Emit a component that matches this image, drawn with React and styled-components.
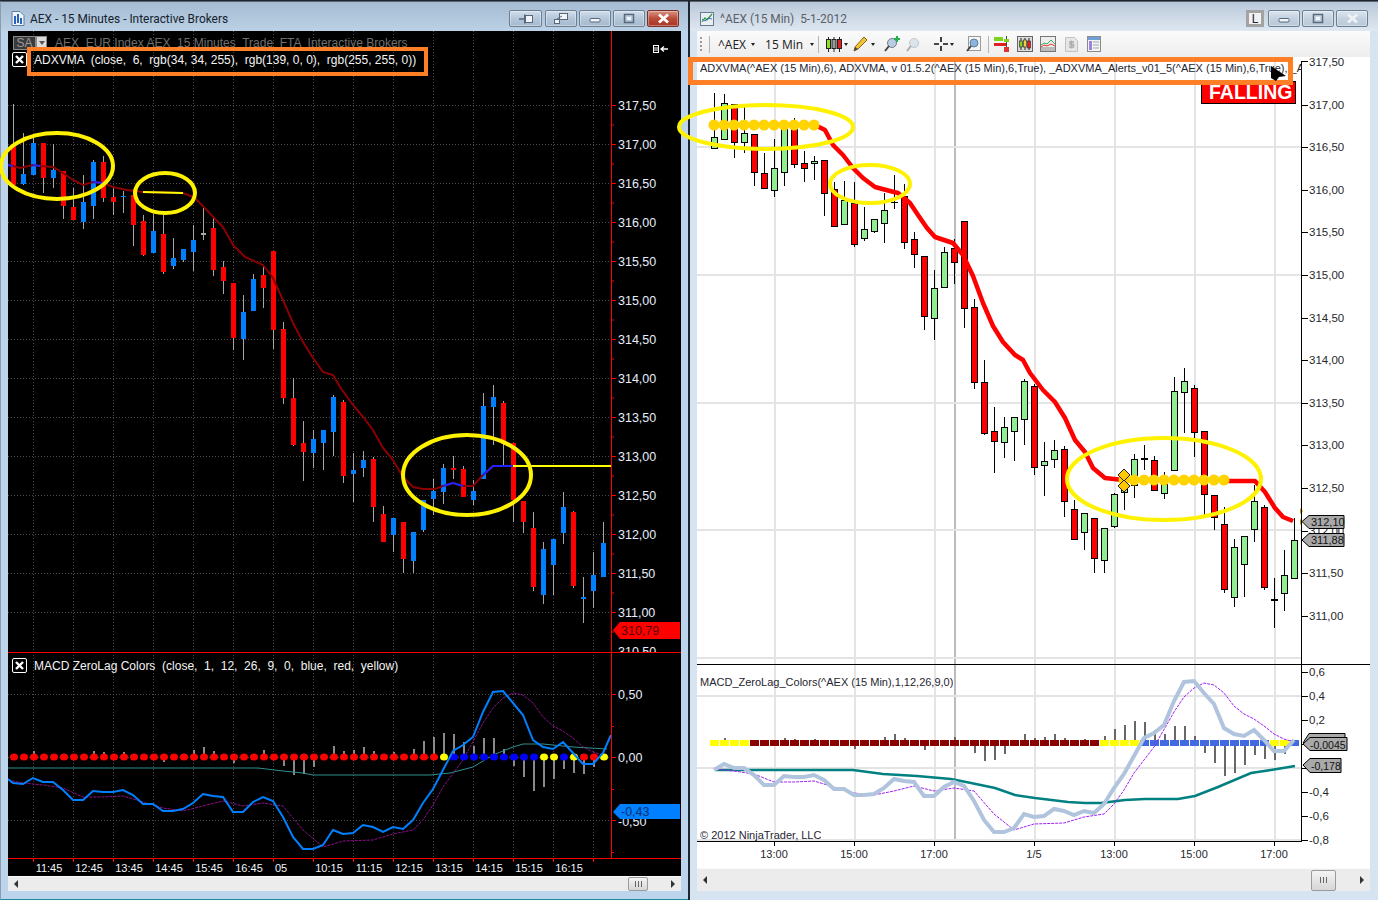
import React from 'react'
import styled, { createGlobalStyle, css } from 'styled-components'

const GlobalStyle = createGlobalStyle`
  html, body { margin: 0; padding: 0; background: #b9d1ea; overflow: hidden; }
  * { box-sizing: border-box; }
`

// bars in pixels of the right chart: high, body top, body bottom, low, type
const BARS = [
  [93,137,148,149,'u'],[94,103,139,139,'u'],[104,104,142,158,'d'],[105,133,142,153,'u'],[134,134,172,186,'d'],
  [153,173,188,188,'d'],[139,168,190,197,'u'],[122,124,172,186,'u'],[118,124,164,168,'d'],[151,163,168,182,'d'],
  [156,161,163,180,'u'],[160,160,193,216,'d'],[182,189,226,227,'d'],[181,200,224,224,'u'],[182,203,244,247,'d'],
  [207,229,238,241,'u'],[219,219,231,233,'u'],[193,210,223,243,'u'],[175,202,202,209,'n'],[184,196,242,249,'d'],
  [232,239,254,268,'d'],[256,256,316,330,'d'],[270,288,318,340,'u'],[247,252,287,287,'u'],[239,248,262,284,'d'],
  [221,221,308,328,'d'],[299,307,382,389,'d'],[360,382,433,435,'d'],[407,431,441,473,'d'],[417,427,442,458,'u'],
  [417,417,431,461,'u'],[379,381,419,445,'u'],[384,386,467,475,'d'],[442,461,465,496,'u'],[440,450,459,468,'u'],
  [446,449,501,517,'d'],[500,509,539,539,'d'],[513,513,532,550,'u'],[518,518,558,573,'d'],[528,528,560,573,'u'],
  [493,494,526,528,'u'],[470,484,492,510,'u'],[454,459,485,498,'u'],[445,458,458,470,'d'],[456,460,490,490,'d'],
  [472,484,493,499,'u'],[377,391,470,470,'u'],[368,381,392,433,'u'],[385,388,432,457,'d'],[431,431,494,518,'d'],
  [495,495,517,530,'d'],[507,524,589,593,'d'],[539,547,597,607,'u'],[536,536,564,597,'u'],[485,501,529,542,'u'],
  [505,507,587,590,'d'],[578,599,599,628,'u'],[550,575,593,611,'u'],[518,540,578,578,'u'],
]
const LEFT_BARS = [[61,106,149,149,'d'], ...BARS]
const toLeft = (y) => Math.round(105 + ((y - 62) * 78) / 85.2)

const LEFT_MA = [[8,165],[13,166],[20,168],[33,165],[40,166],[53,167],[63,173],[73,180],[83,185],[93,182],[103,183],[113,187],[127,190],[143,192],[183,193],[193,197],[197,200],[223,227],[233,245],[245,257],[263,265],[273,278],[283,300],[293,323],[303,342],[313,358],[323,372],[333,375],[340,387],[353,405],[363,417],[373,430],[383,448],[393,460],[403,477],[413,487],[423,489],[435,489],[443,486],[453,483],[463,486],[473,486],[483,475],[493,466],[513,466]]
const LEFT_MA_BLUE = [[[8,165],[13,166]],[[33,165],[40,166]],[[93,182],[103,183]],[[443,486],[453,483],[463,486]],[[483,475],[493,466],[513,466]]]
const LEFT_MA_YELLOW = [[[143,192],[183,193]],[[513,466],[611,466]]]

const RIGHT_MA = [[815,125],[825,130],[833,145],[843,155],[853,168],[863,178],[875,187],[890,191],[898,193],[910,203],[918,215],[927,228],[935,237],[953,243],[963,255],[973,276],[983,303],[993,326],[1003,342],[1015,355],[1023,360],[1030,373],[1043,390],[1055,402],[1065,418],[1075,440],[1085,452],[1093,468],[1105,478],[1123,480]]
const RIGHT_MA_END = [[1227,481],[1255,481],[1265,492],[1275,508],[1283,517],[1293,521]]

const MACD = [[8,779],[13,783],[23,784],[33,778],[43,782],[53,782],[63,790],[73,800],[83,800],[93,791],[103,792],[113,792],[123,790],[133,795],[143,804],[153,804],[163,811],[173,811],[183,809],[193,803],[203,794],[213,796],[223,797],[233,812],[243,812],[253,802],[263,797],[273,801],[283,817],[293,837],[303,849],[313,849],[323,845],[333,830],[343,834],[353,833],[363,825],[373,827],[383,832],[393,827],[403,829],[413,820],[423,803],[433,789],[443,770],[453,751],[463,745],[473,737],[483,712],[493,692],[503,691],[513,703],[523,715],[533,740],[543,747],[553,749],[563,742],[573,753],[583,764],[593,764],[603,753],[611,735]]
const SIGNAL = [[8,780],[23,783],[43,785],[63,788],[83,797],[103,797],[123,796],[143,802],[163,808],[183,811],[203,806],[223,801],[243,806],[263,803],[283,806],[303,830],[323,847],[343,841],[373,840],[393,834],[413,830],[423,820],[433,805],[443,787],[463,760],[483,723],[493,708],[503,698],[513,693],[523,695],[533,703],[543,717],[553,726],[563,731],[573,738],[583,747],[593,752],[603,755]]
const LEFT_TEAL = [[8,768],[258,768],[283,771],[303,773],[313,775],[430,775],[450,773],[473,767],[493,755],[513,747],[523,744],[543,744],[573,747],[607,749]]
const RIGHT_TEAL = [[715,770],[853,770],[883,774],[917,776],[951,779],[971,783],[995,788],[1015,795],[1035,798],[1068,802],[1085,803],[1101,803],[1125,800],[1145,799],[1178,799],[1195,796],[1218,787],[1251,773],[1271,770],[1295,766]]

// histogram: bar index and offset from the zero line in left pixels
const HIST = {2:-6,8:-6,9:-5,11:-5,15:5,18:-7,19:-10,20:-6,22:6,25:-7,27:9,28:18,29:17,30:10,32:-11,33:-6,34:-7,35:-10,36:-6,38:-5,40:-8,41:-16,42:-20,43:-24,44:-23,45:-15,46:-11,47:-19,48:-19,49:-8,50:9,51:20,52:34,53:30,54:22,55:12,56:16,57:17,58:10}

const leftDotColor = (i) => {
  if (i < 43) return '#ff0000'
  if ([43,53,54,56,59].includes(i)) return '#ffff00'
  if ([57,58].includes(i)) return '#ff0000'
  return '#0000ff'
}
const rightSquareColor = (k) => {
  if (k < 4 || (k >= 39 && k < 43) || k === 56 || k === 57) return '#ffff00'
  if (k < 39) return '#8b0000'
  return '#4169e1'
}

const LEFT_PRICES = ['317,50','317,00','316,50','316,00','315,50','315,00','314,50','314,00','313,50','313,00','312,50','312,00','311,50','311,00']
const LEFT_TIMES = [['11:45',49],['12:45',89],['13:45',129],['14:45',169],['15:45',209],['16:45',249],['05',281],['10:15',329],['11:15',369],['12:15',409],['13:15',449],['14:15',489],['15:15',529],['16:15',569]]
const RIGHT_TIMES = [['13:00',774],['15:00',854],['17:00',934],['1/5',1034],['13:00',1114],['15:00',1194],['17:00',1274]]
const RIGHT_LOWER = [['0,6',672],['0,4',696],['0,2',720],['-0,4',792],['-0,6',816],['-0,8',840]]

const pts = (list) => list.map((p) => p.join(',')).join(' ')
const toRightMacd = (list) => list.filter(([x]) => x >= 23 && x <= 603).map(([x, y]) => [x + 691, Math.round(744 + ((y - 757) * 120) / 126)])

const Desktop = styled.div`
  position: relative;
  display: flex;
  width: 1378px;
  height: 900px;
  background: #1c2530;
  font-family: "Liberation Sans", Arial, sans-serif;
`
const Window = styled.div`
  display: flex;
  flex-direction: column;
  height: 900px;
  border-top: 1px solid #5a6470;
  margin-top: 1px;
  ${(p) => p.$side === 'left' ? css`
    width: 688px;
    padding: 0 7px 7px 7px;
    background: #bdd5ec;
    border-left: 1px solid #8c9cab;
    border-bottom: 2px solid #1d8f9c;
  ` : css`
    width: 688px;
    margin-left: 2px;
    padding: 0 8px 9px 7px;
    background: #d6e4f2;
  `}
`
const TitleBar = styled.div`
  display: flex;
  align-items: center;
  flex: 0 0 29px;
  ${(p) => p.$side === 'left' ? css`
    margin: 0 -7px;
    padding: 4px 9px 0 10px;
    background: linear-gradient(#a4bbd2, #bcd1e5);
  ` : css`
    margin: 0 -8px 0 -7px;
    padding: 4px 10px 0 10px;
    background: linear-gradient(#b9c8d9, #dfe8f1);
  `}
`
const TitleText = styled.span`
  margin-left: ${(p) => p.$side === 'left' ? 5 : 6}px;
  font: 11.9px Roboto, sans-serif;
  color: ${(p) => p.$side === 'left' ? '#16222e' : '#5a6068'};
  white-space: pre;
`
const TitleSpace = styled.div`
  flex: 1;
`
const WinButton = styled.div`
  display: flex;
  align-items: center;
  justify-content: center;
  width: ${(p) => p.$w || 32}px;
  height: 17px;
  margin-left: ${(p) => p.$ml || 2}px;
  border: 1px solid ${(p) => p.$close ? '#7a3228' : '#6b7f93'};
  border-radius: 2px;
  box-shadow: inset 0 0 0 1px rgba(255, 255, 255, 0.35);
  background: ${(p) => p.$close
    ? 'linear-gradient(#dc9484, #bb4c3a 50%, #a93525)'
    : p.$side === 'left' ? 'linear-gradient(#d2deeb, #b4c6d9 50%, #a5b9ce)' : 'linear-gradient(#dbe4ee, #c3d1df 50%, #b8c8d8)'};
`
const LockButton = styled.div`
  display: flex;
  align-items: center;
  justify-content: center;
  width: 18px;
  height: 17px;
  margin-right: 2px;
  border: 3px solid #a3a3a3;
  background: #f2f2f2;
  font: 12px "Liberation Sans", sans-serif;
  color: #223;
`
const BlackChart = styled.div`
  position: relative;
  flex: 0 0 845px;
  background: #000;
  overflow: hidden;
`
const WhiteChart = styled.div`
  position: relative;
  flex: 0 0 811px;
  background: #fff;
  overflow: hidden;
`
const ChartSvg = styled.svg`
  display: block;
  text {
    font-family: "Liberation Sans", Arial, sans-serif;
  }
`
const HeaderRow = styled.div`
  position: absolute;
  left: 5px;
  top: 5px;
  display: flex;
  align-items: center;
  height: 14px;
`
const SaBox = styled.div`
  width: 23px;
  height: 14px;
  border: 1px solid #8a8a8a;
  background: #3a3a3a;
  font-size: 12px;
  line-height: 12px;
  text-align: center;
  color: #9a9a9a;
`
const SaCaret = styled.div`
  width: 11px;
  height: 14px;
  margin-right: 8px;
  border: 1px solid #8a8a8a;
  background: #dcdcdc;
  &::after {
    content: '';
    display: block;
    margin: 4px auto 0;
    width: 0;
    border: 3px solid transparent;
    border-top: 4px solid #555;
  }
`
const HeaderText = styled.span`
  font-size: 12px;
  color: #6f6f6f;
  white-space: pre;
`
const LegendRow = styled.div`
  position: absolute;
  left: 4px;
  top: ${(p) => p.$top}px;
  display: flex;
  align-items: center;
  gap: 7px;
  height: 15px;
`
const LegendText = styled.span`
  font-size: 12px;
  color: #f4f4f4;
  white-space: pre;
`
const XBox = styled.div`
  width: 15px;
  height: 15px;
  border: 1px solid #fff;
  border-radius: 2px;
  background: #000;
`
const ListGlyph = styled.svg`
  position: absolute;
  left: 645px;
  top: 14px;
`
const WhiteLegend = styled.div`
  position: absolute;
  left: 3px;
  top: ${(p) => p.$top}px;
  max-width: 602px;
  overflow: hidden;
  font-size: 11px;
  line-height: 13px;
  color: #1f2630;
  white-space: pre;
`
const Falling = styled.div`
  position: absolute;
  left: 504px;
  top: 24px;
  width: 95px;
  height: 23px;
  padding-left: 7px;
  border: 1px solid #000;
  background: #ff0000;
  font-size: 19.5px;
  font-weight: 700;
  line-height: 21px;
  color: #fff;
`
const Toolbar = styled.div`
  display: flex;
  align-items: center;
  flex: 0 0 26px;
  padding-left: 3px;
  background: linear-gradient(#fbfbfb, #ededed);
  font-size: 12px;
  color: #222;
`
const Grip = styled.div`
  width: 2px;
  height: 15px;
  background: repeating-linear-gradient(#9a9a9a 0 2px, transparent 2px 4px);
`
const ToolSep = styled.div`
  width: 1px;
  height: 17px;
  margin-left: ${(p) => p.$ml}px;
  background: #b5b5b5;
`
const ToolLabel = styled.span`
  margin-left: ${(p) => p.$ml}px;
  font: 12px "Open Sans", sans-serif;
  color: #202020;
  white-space: pre;
`
const Caret = styled.span`
  width: 0;
  height: 0;
  margin-left: ${(p) => p.$ml}px;
  border: 2.5px solid transparent;
  border-top: 3px solid #222;
  border-bottom: 0;
`
const ToolIcon = styled.svg`
  flex: none;
  margin-left: ${(p) => p.$ml}px;
`
const ScrollBar = styled.div`
  display: flex;
  align-items: center;
  flex: 0 0 ${(p) => p.$h}px;
  padding: 0 6px 0 6px;
  border-top: 1px solid #fafafa;
  background: #ececec;
`
const ArrowLeft = styled.span`
  width: 0;
  height: 0;
  border: 4px solid transparent;
  border-right: 4px solid #333;
  border-left: 0;
`
const ArrowRight = styled.span`
  width: 0;
  height: 0;
  margin-left: ${(p) => p.$ml}px;
  border: 4px solid transparent;
  border-left: 4px solid #333;
  border-right: 0;
`
const Thumb = styled.div`
  display: flex;
  align-items: center;
  justify-content: center;
  width: ${(p) => p.$w}px;
  height: ${(p) => p.$h}px;
  margin-left: auto;
  border: 1px solid #9b9b9b;
  border-radius: 2px;
  background: linear-gradient(#f4f4f4, #d6d6d6);
  font-size: 9px;
  letter-spacing: 1px;
  color: #555;
  &::after {
    content: '';
    width: 7px;
    height: 6px;
    background: repeating-linear-gradient(90deg, #666 0 1px, transparent 1px 3px);
  }
`
const Overlay = styled.svg`
  position: absolute;
  left: 0;
  top: 0;
  pointer-events: none;
`

const XMark = () => (
  <svg width="13" height="13" viewBox="0 0 13 13" style={{ display: 'block' }}>
    <path d="M3 3l7 7M10 3l-7 7" stroke="#fff" strokeWidth="2.4" />
  </svg>
)

const Glyph = ({ kind, color = '#f2f5f8', line = '#55687c' }) => {
  if (kind === 'pin') return (
    <svg width="16" height="12" viewBox="0 0 16 12"><path d="M1 6h5" stroke={line} strokeWidth="1.5" /><rect x="6" y="1.5" width="1.5" height="9" fill={line} /><rect x="7.5" y="2.5" width="7" height="7" fill={color} stroke={line} /></svg>
  )
  if (kind === 'float') return (
    <svg width="16" height="13" viewBox="0 0 16 13"><rect x="6.5" y="1.5" width="8" height="6" fill={color} stroke={line} /><rect x="1.5" y="7.5" width="5" height="4" fill={color} stroke={line} /><path d="M4 7l5-3" stroke={line} /></svg>
  )
  if (kind === 'min') return (
    <svg width="13" height="7" viewBox="0 0 13 7" style={{ marginTop: 4 }}><rect x="1" y="1.5" width="10" height="3.5" rx="1" fill={color} stroke={line} /></svg>
  )
  if (kind === 'max') return (
    <svg width="12" height="11" viewBox="0 0 12 11"><rect x="1.5" y="1.5" width="9" height="8" fill="none" stroke={line} strokeWidth="1.5" /><rect x="4" y="4" width="4" height="3" fill={color} /></svg>
  )
  return (
    <svg width="13" height="11" viewBox="0 0 13 11"><path d="M2 1.5l9 8M11 1.5l-9 8" stroke={color} strokeWidth="2.8" /></svg>
  )
}

const LeftTitleIcon = () => (
  <svg width="14" height="15" viewBox="0 0 14 15">
    <path d="M1 .5h8l4 4v10H1z" fill="#eef3fa" stroke="#5f7fa8" />
    <path d="M4 5v8M7 3v9M10 7v6" stroke="#2a64b8" strokeWidth="2" />
  </svg>
)
const RightTitleIcon = () => (
  <svg width="14" height="14" viewBox="0 0 14 14">
    <rect x=".5" y=".5" width="13" height="13" fill="#e8eef4" stroke="#6a7a8c" />
    <path d="M2 10l3-4 2 2 5-6" fill="none" stroke="#2f9a3a" strokeWidth="1.2" />
    <path d="M2 7l3 2 3-3 4 1" fill="none" stroke="#3d6fc0" strokeWidth="1" />
  </svg>
)
const CandlesIcon = () => (
  <ToolIcon $ml={7} width="16" height="17" viewBox="0 0 16 17">
    <path d="M2.5 1v15M8 1v15M13.5 1v15" stroke="#222" />
    <rect x=".5" y="3.5" width="4" height="9" fill="#8fe020" stroke="#222" />
    <rect x="6" y="3.5" width="4" height="9" fill="#9a9a9a" stroke="#222" />
    <rect x="11.5" y="3.5" width="4" height="9" fill="#e02020" stroke="#222" />
  </ToolIcon>
)
const PencilIcon = () => (
  <ToolIcon $ml={5} width="15" height="16" viewBox="0 0 15 16">
    <path d="M11 1l3 3-9 9-4 2 1-4z" fill="#f4c430" stroke="#8a6a20" />
    <path d="M1 15l1-4 3 2z" fill="#444" />
  </ToolIcon>
)
const MagnifierIcon = ({ ml, faded, plus }) => (
  <ToolIcon $ml={ml} width="17" height="16" viewBox="0 0 17 16" opacity={faded ? 0.4 : 1}>
    <circle cx="8" cy="7" r="4.5" fill="#b9cde2" stroke="#6f7f90" />
    <path d="M5 10l-4 5" stroke="#444" strokeWidth="2" />
    {plus && <path d="M13 0v6M10 3h6" stroke="#22b14c" strokeWidth="2" />}
  </ToolIcon>
)
const CrossIcon = () => (
  <ToolIcon $ml={11} width="14" height="14" viewBox="0 0 14 14">
    <path d="M7 0v5M7 9v5M0 7h5M9 7h5" stroke="#111" strokeWidth="1.6" />
  </ToolIcon>
)
const PageMagIcon = () => (
  <ToolIcon $ml={12} width="15" height="16" viewBox="0 0 15 16">
    <rect x="2.5" y=".5" width="12" height="14" fill="#f6f6f6" stroke="#999" />
    <circle cx="8" cy="7" r="4" fill="#8fb4dc" stroke="#5f7f9f" />
    <path d="M5 10l-4 5" stroke="#444" strokeWidth="2" />
  </ToolIcon>
)
const BarsIcon = () => (
  <ToolIcon $ml={5} width="16" height="16" viewBox="0 0 16 16">
    <path d="M12.5 0v16" stroke="#444" />
    <rect x="0" y="1" width="9" height="4" fill="#7ed321" />
    <rect x="0" y="7" width="12" height="3" fill="#e02020" />
    <rect x="10" y="11" width="5" height="5" fill="#d33" />
    <rect x="10" y="3" width="5" height="3" fill="#7ed321" />
  </ToolIcon>
)
const CandleBoxIcon = () => (
  <ToolIcon $ml={7} width="16" height="16" viewBox="0 0 16 16">
    <rect x=".5" y=".5" width="15" height="15" fill="#dcdcdc" stroke="#666" />
    <path d="M4 2v12M8 2v12M12 2v12" stroke="#222" />
    <rect x="2.5" y="5" width="3" height="6" fill="#7ed321" stroke="#222" strokeWidth=".6" />
    <rect x="6.5" y="4" width="3" height="7" fill="#f0d040" stroke="#222" strokeWidth=".6" />
    <rect x="10.5" y="5" width="3" height="7" fill="#e02020" stroke="#222" strokeWidth=".6" />
  </ToolIcon>
)
const ChartIcon = () => (
  <ToolIcon $ml={7} width="16" height="16" viewBox="0 0 16 16">
    <rect x=".5" y=".5" width="15" height="15" fill="#eeeeee" stroke="#777" />
    <rect x="1" y="11" width="14" height="4" fill="#bbb" />
    <path d="M1 9l3-2 3 1 4-4 4 4" fill="none" stroke="#3aaa5a" />
    <path d="M1 11l3-2 3 1 4-2 4 2" fill="none" stroke="#d33" />
  </ToolIcon>
)
const DollarIcon = () => (
  <ToolIcon $ml={9} width="13" height="15" viewBox="0 0 13 15">
    <path d="M.5.5h9l3 3v11H.5z" fill="#e6e6e6" stroke="#c2c2c2" />
    <path d="M9 5H5v2.500h3.500V10H4M6.500 3.500v8" fill="none" stroke="#adadad" strokeWidth="1.400" />
  </ToolIcon>
)
const TableIcon = () => (
  <ToolIcon $ml={9} width="14" height="16" viewBox="0 0 14 16">
    <rect x=".5" y=".5" width="13" height="15" fill="#f4f4f4" stroke="#8a8a8a" />
    <rect x="1" y="1" width="12" height="3" fill="#6f9fd8" />
    <rect x="2" y="5" width="3" height="9" fill="#a080e0" />
    <path d="M6 6h6M6 9h6M6 12h6" stroke="#9aa" />
  </ToolIcon>
)

const LeftUpperChart = () => (
  <g>
    {LEFT_PRICES.map((_, k) => (
      <line key={k} x1="8" x2="611" y1={105 + 39 * k + 0.5} y2={105 + 39 * k + 0.5} stroke="#4a4a4a" strokeDasharray="1 2" />
    ))}
    {Array.from({ length: 15 }, (_, k) => (
      <line key={k} x1={33.5 + 40 * k} x2={33.5 + 40 * k} y1="31" y2="858" stroke="#4a4a4a" strokeDasharray="1 2" />
    ))}
    {LEFT_BARS.map(([hi, top, bot, lo, t], i) => {
      const x = 13 + 10 * i
      const doji = top === bot
      const fill = t === 'n' ? '#aaaaaa' : t === 'u' ? '#0080ff' : '#ff0000'
      return (
        <g key={i}>
          <rect x={x} y={toLeft(hi)} width="1" height={toLeft(lo) - toLeft(hi)} fill="#a6a6a6" />
          <rect x={x - 2} y={toLeft(top)} width="5" height={doji ? 2 : toLeft(bot) - toLeft(top)} fill={fill} />
        </g>
      )
    })}
    <polyline points={pts(LEFT_MA)} fill="none" stroke="#8b0000" strokeWidth="2" />
    {LEFT_MA_BLUE.map((s, k) => <polyline key={k} points={pts(s)} fill="none" stroke="#2222ff" strokeWidth="2" />)}
    {LEFT_MA_YELLOW.map((s, k) => <polyline key={k} points={pts(s)} fill="none" stroke="#ffff00" strokeWidth="2" />)}
    {LEFT_PRICES.map((p, k) => (
      <g key={p}>
        <line x1="611" x2="616" y1={105.5 + 39 * k} y2={105.5 + 39 * k} stroke="#ff0000" />
        <line x1="611" x2="614" y1={125 + 39 * k} y2={125 + 39 * k} stroke="#ff0000" />
        <text x="618" y={110 + 39 * k} fontSize="12.5" fill="#e6eefc">{p}</text>
      </g>
    ))}
    <text x="618" y="655.500" fontSize="12.5" fill="#e6eefc">310,50</text>
  </g>
)

const LeftLowerChart = () => (
  <g>
    <rect x="8" y="652" width="673" height="224" fill="#000" />
    {[694, 757, 820].map((y) => (
      <line key={y} x1="8" x2="611" y1={y + 0.5} y2={y + 0.5} stroke="#4a4a4a" strokeDasharray="1 2" />
    ))}
    {Array.from({ length: 15 }, (_, k) => (
      <line key={k} x1={33.5 + 40 * k} x2={33.5 + 40 * k} y1="652" y2="858" stroke="#4a4a4a" strokeDasharray="1 2" />
    ))}
    {Object.entries(HIST).map(([i, d]) => (
      <rect key={i} x={12 + 10 * i + 1} y={d < 0 ? 757 + d : 757} width="2" height={Math.abs(d)} fill="#8a8a8a" />
    ))}
    <polyline points={pts(LEFT_TEAL)} fill="none" stroke="#2f8f8f" strokeWidth="1" />
    <polyline points={pts(SIGNAL)} fill="none" stroke="#8b108b" strokeWidth="1" strokeDasharray="3 1" />
    {Array.from({ length: 60 }, (_, i) => (
      <ellipse key={i} cx={14 + 10 * i} cy="757" rx="4" ry="3.600" fill={leftDotColor(i)} />
    ))}
    <polyline points={pts(MACD)} fill="none" stroke="#0080ff" strokeWidth="2" />
    <rect x="8" y="652" width="673" height="1" fill="#ff0000" />
    <rect x="8" y="858" width="673" height="1" fill="#ff0000" />
    <rect x="611" y="31" width="1" height="827" fill="#ff0000" />
    {[694, 757, 820].map((y) => <line key={y} x1="611" x2="616" y1={y + 0.5} y2={y + 0.5} stroke="#ff0000" />)}
    {[726, 789, 852].map((y) => <line key={y} x1="611" x2="614" y1={y + 0.5} y2={y + 0.5} stroke="#ff0000" />)}
    <text x="618" y="698.500" fontSize="12.5" fill="#e6eefc">0,50</text>
    <text x="618" y="761.500" fontSize="12.5" fill="#e6eefc">0,00</text>
    <text x="618" y="825.500" fontSize="12.5" fill="#e6eefc">-0,50</text>
    <polygon points="613,630 620,622 680,622 680,639 620,639" fill="#ff0000" />
    <text x="621" y="635" fontSize="12.5" fill="#5a0000">310,79</text>
    <polygon points="613,812 620,804 680,804 680,819 620,819" fill="#0080ff" />
    <text x="621" y="816" fontSize="12.5" fill="#00306e">-0,43</text>
    {Array.from({ length: 15 }, (_, k) => (
      <line key={k} x1={33.5 + 40 * k} x2={33.5 + 40 * k} y1="858" y2="862" stroke="#ff0000" />
    ))}
    {LEFT_TIMES.map(([t, x], k) => (
      <text key={k} x={x} y="872" fontSize="11" fill="#f0f4fa" textAnchor="middle">{t}</text>
    ))}
  </g>
)

const RightUpperChart = () => (
  <g>
    {[774, 854, 934, 1034, 1114, 1194, 1274].map((x) => (
      <rect key={x} x={x} y="57" width="2" height="784" fill="#e4e4e4" />
    ))}
    <rect x="954" y="57" width="2" height="784" fill="#bcbcbc" />
    {[146, 274, 402, 529, 657].map((y) => (
      <rect key={y} x="697" y={y} width="605" height="2" fill="#e4e4e4" />
    ))}
    {BARS.map(([hi, top, bot, lo, t], i) => {
      const x = 714 + 10 * i
      const doji = top === bot
      return (
        <g key={i}>
          <rect x={x} y={hi} width="1" height={lo - hi} fill="#000" />
          {doji
            ? <rect x={x - 3} y={top} width="7" height={t === 'n' ? 1 : 2} fill="#000" />
            : <rect x={x - 2.5} y={top + 0.5} width="6" height={bot - top} fill={t === 'u' ? '#90ee90' : '#ff0000'} stroke="#000" />}
        </g>
      )
    })}
    <polyline points={pts(RIGHT_MA)} fill="none" stroke="#ff0000" strokeWidth="4.500" strokeLinejoin="round" />
    <polyline points={pts(RIGHT_MA_END)} fill="none" stroke="#ff0000" strokeWidth="4.500" strokeLinejoin="round" />
    {Array.from({ length: 11 }, (_, k) => <circle key={k} cx={714 + 10 * k} cy="125" r="5.500" fill="#ffd400" />)}
    {Array.from({ length: 11 }, (_, k) => <circle key={k} cx={1124 + 10 * k} cy="480" r="5.500" fill="#ffd400" />)}
    {[475, 486].map((y) => (
      <polygon key={y} points={`1124,${y - 6} 1130,${y} 1124,${y + 6} 1118,${y}`} fill="#ffc800" stroke="#222" />
    ))}
    <polygon points="1300,508 1303,511 1300,514" fill="#c8a000" />
    <polygon points="1300,519 1303,522 1300,525" fill="#c8a000" />
  </g>
)

const RightLowerChart = () => (
  <g>
    {[695, 767, 839].map((y) => <rect key={y} x="697" y={y} width="605" height="2" fill="#e4e4e4" />)}
    <polyline points={pts(RIGHT_TEAL)} fill="none" stroke="#008080" strokeWidth="2.500" />
    {Object.entries(HIST).map(([i, d]) => {
      const h = Math.round(Math.abs(d) * 0.952)
      return <rect key={i} x={704 + 10 * i} y={d < 0 ? 744 - h : 744} width="2" height={h} fill="#686868" />
    })}
    {Array.from({ length: 59 }, (_, k) => (
      <rect key={k} x={710 + 10 * k} y="740" width="9" height="6" fill={rightSquareColor(k)} />
    ))}
    <polyline points={pts(toRightMacd(SIGNAL))} fill="none" stroke="#a020f0" strokeWidth="1" strokeDasharray="3 1" />
    <polyline points={pts(toRightMacd(MACD))} fill="none" stroke="#b0c4de" strokeWidth="4" />
    <rect x="697" y="664" width="673" height="1" fill="#000" />
    <rect x="697" y="841" width="605" height="1" fill="#000" />
    <rect x="1301" y="61" width="1" height="781" fill="#000" />
    <rect x="1302" y="61" width="6" height="1" fill="#000" />
    {Array.from({ length: 14 }, (_, k) => {
      const y = Math.round(62 + 42.6 * k)
      const p = (317.5 - 0.5 * k).toFixed(2).replace('.', ',')
      return (
        <g key={p}>
          {k > 0 && <rect x="1302" y={y} width="6" height="1" fill="#000" />}
          <text x="1309" y={y + 4} fontSize="11.500" fill="#26282c">{p}</text>
        </g>
      )
    })}
    {[672, 696, 720, 744, 768, 792, 816, 840].map((y) => <rect key={y} x="1302" y={y} width="6" height="1" fill="#000" />)}
    {RIGHT_LOWER.map(([t, y]) => <text key={y} x="1309" y={y + 4} fontSize="11.500" fill="#26282c">{t}</text>)}
    <polygon points="1303,743 1309,733.500 1345,733.500 1345,745 1309,745" fill="#a9a9a9" stroke="#000" />
    <polygon points="1303,744 1310,737.500 1347,737.500 1347,750.500 1310,750.500" fill="#a9a9a9" stroke="#000" />
    <text x="1310" y="748.500" fontSize="10.500" fill="#111">-0,0045</text>
    <polygon points="1303,765 1310,758.500 1341,758.500 1341,772.500 1310,772.500" fill="#a9a9a9" stroke="#000" />
    <text x="1311" y="769.500" fontSize="10.500" fill="#111">-0,178</text>
    <polygon points="1302,521.500 1309,515.500 1344,515.500 1344,528.500 1309,528.500" fill="#a9a9a9" stroke="#000" />
    <text x="1311" y="526" fontSize="11" fill="#111">312,10</text>
    <polygon points="1302,540 1309,533.500 1344,533.500 1344,546.500 1309,546.500" fill="#a9a9a9" stroke="#000" />
    <text x="1311" y="544" fontSize="11" fill="#111">311,88</text>
    {RIGHT_TIMES.map(([t, x], k) => (
      <g key={k}>
        <rect x={x} y="842" width="1" height="4" fill="#000" />
        <text x={x} y="858" fontSize="11" fill="#26282c" textAnchor="middle">{t}</text>
      </g>
    ))}
  </g>
)

const App = () => (
  <Desktop>
    <GlobalStyle />
    <Window $side="left">
      <TitleBar $side="left">
        <LeftTitleIcon />
        <TitleText $side="left">AEX - 15 Minutes - Interactive Brokers</TitleText>
        <TitleSpace />
        <WinButton $side="left" $w={33}><Glyph kind="pin" /></WinButton>
        <WinButton $side="left" $ml={3}><Glyph kind="float" /></WinButton>
        <WinButton $side="left"><Glyph kind="min" /></WinButton>
        <WinButton $side="left"><Glyph kind="max" /></WinButton>
        <WinButton $side="left" $close><Glyph kind="close" color="#fff" /></WinButton>
      </TitleBar>
      <BlackChart>
        <ChartSvg width="673" height="845" viewBox="8 31 673 845">
          <LeftUpperChart />
          <LeftLowerChart />
        </ChartSvg>
        <HeaderRow>
          <SaBox>SA</SaBox>
          <SaCaret />
          <HeaderText>AEX  EUR Index AEX  15 Minutes  Trade  FTA  Interactive Brokers</HeaderText>
        </HeaderRow>
        <LegendRow $top={21}>
          <XBox><XMark /></XBox>
          <LegendText>ADXVMA  (close,  6,  rgb(34, 34, 255),  rgb(139, 0, 0),  rgb(255, 255, 0))</LegendText>
        </LegendRow>
        <LegendRow $top={627}>
          <XBox><XMark /></XBox>
          <LegendText>MACD ZeroLag Colors  (close,  1,  12,  26,  9,  0,  blue,  red,  yellow)</LegendText>
        </LegendRow>
        <ListGlyph width="16" height="9" viewBox="0 0 16 9">
          <rect x=".5" y=".5" width="5" height="7" fill="none" stroke="#fff" />
          <path d="M1 3h4M1 5h4" stroke="#fff" />
          <path d="M8 4h7M11 1.500L8 4l3 2.500" fill="none" stroke="#fff" strokeWidth="1.300" />
        </ListGlyph>
      </BlackChart>
      <ScrollBar $h={15}>
        <ArrowLeft />
        <Thumb $w={20} $h={14} />
        <ArrowRight $ml={23} />
      </ScrollBar>
    </Window>
    <Window $side="right">
      <TitleBar $side="right">
        <RightTitleIcon />
        <TitleText $side="right">^AEX (15 Min)  5-1-2012</TitleText>
        <TitleSpace />
        <LockButton>L</LockButton>
        <WinButton><Glyph kind="min" /></WinButton>
        <WinButton><Glyph kind="max" /></WinButton>
        <WinButton><Glyph kind="close" color="#eef2f6" /></WinButton>
      </TitleBar>
      <Toolbar>
        <Grip />
        <ToolSep $ml={7} />
        <ToolLabel $ml={8}>^AEX</ToolLabel>
        <Caret $ml={5} />
        <ToolLabel $ml={10}>15 Min</ToolLabel>
        <Caret $ml={7} />
        <ToolSep $ml={4} />
        <CandlesIcon />
        <Caret $ml={2} />
        <PencilIcon />
        <Caret $ml={3} />
        <MagnifierIcon ml={9} plus />
        <MagnifierIcon ml={5} faded />
        <CrossIcon />
        <Caret $ml={2} />
        <PageMagIcon />
        <ToolSep $ml={7} />
        <BarsIcon />
        <CandleBoxIcon />
        <ChartIcon />
        <DollarIcon />
        <TableIcon />
      </Toolbar>
      <WhiteChart>
        <ChartSvg width="673" height="811" viewBox="697 57 673 811">
          <RightUpperChart />
          <RightLowerChart />
        </ChartSvg>
        <WhiteLegend $top={5}>ADXVMA(^AEX (15 Min),6), ADXVMA, v 01.5.2(^AEX (15 Min),6,True), _ADXVMA_Alerts_v01_5(^AEX (15 Min),6,True), _ADXVMA</WhiteLegend>
        <Falling>FALLING</Falling>
        <WhiteLegend $top={619}>MACD_ZeroLag_Colors(^AEX (15 Min),1,12,26,9,0)</WhiteLegend>
        <WhiteLegend $top={772}>© 2012 NinjaTrader, LLC</WhiteLegend>
      </WhiteChart>
      <ScrollBar $h={23}>
        <ArrowLeft />
        <Thumb $w={25} $h={21} />
        <ArrowRight $ml={24} />
      </ScrollBar>
    </Window>
    <Overlay width="1378" height="900" viewBox="0 0 1378 900">
      <g fill="none" stroke="#fff200" strokeWidth="4">
        <ellipse cx="57" cy="166" rx="56" ry="33" />
        <ellipse cx="165" cy="193" rx="30" ry="20" />
        <ellipse cx="467" cy="475" rx="64" ry="40" />
        <ellipse cx="766" cy="127" rx="87" ry="22" />
        <ellipse cx="870" cy="184" rx="40" ry="19" />
        <ellipse cx="1164" cy="479" rx="97" ry="41" />
      </g>
      <g fill="none" stroke="#ff7f27">
        <rect x="29" y="49" width="397" height="25" strokeWidth="4" />
        <rect x="690.500" y="59.500" width="600" height="23" strokeWidth="5" />
      </g>
      <path d="M1271 66l15 10-7 1-3 4-5-3z" fill="#000" />
    </Overlay>
  </Desktop>
)

export default App
